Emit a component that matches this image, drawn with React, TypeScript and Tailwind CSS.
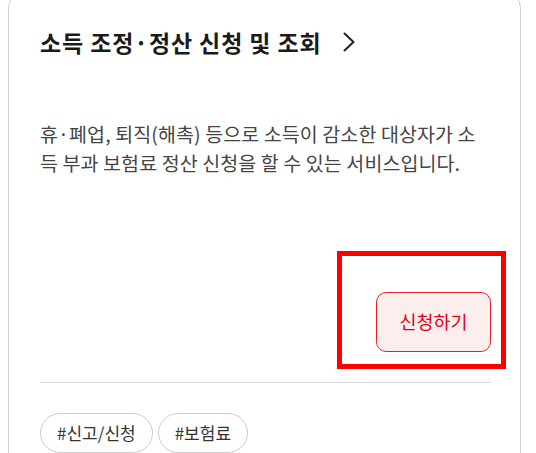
import React from "react";

export default function App() {
  return (
    <div className="w-[536px] h-[453px] overflow-hidden bg-white" style={{ fontFamily: '"Noto Sans CJK KR", "Noto Sans", sans-serif' }}>
      <div className="relative mt-[-8px] ml-[8px] w-[513px] border border-[#cfcfcf] rounded-[16px] pl-[31px] pr-[29px] pt-[34px] pb-[30px]">
        <div className="flex items-center h-[30px]">
          <span className="text-[23px] font-bold text-[#1a1a1a] tracking-[0.9px]">소득 조정·정산 신청 및 조회</span>
          <svg className="ml-[20px]" width="14" height="20" viewBox="0 0 14 20" fill="none">
            <path d="M2.5 1.5 L11.5 10 L2.5 18.5" stroke="#222" strokeWidth="2" strokeLinecap="round" strokeLinejoin="round" />
          </svg>
        </div>
        <p className="mt-[62px] w-[442px] text-[19.5px] leading-[29px] text-[#444] tracking-[0.1px]">
          휴·폐업, 퇴직(해촉) 등으로 소득이 감소한 대상자가 소득 부과 보험료 정산 신청을 할 수 있는 서비스입니다.
        </p>
        <div className="flex justify-end mt-[115px]">
          <div className="relative">
            <button className="w-[115px] h-[60px] rounded-[10px] border border-[#e8202a] bg-[#fdeeee] text-[#e60012] text-[18.5px]">
              신청하기
            </button>
            <div className="absolute left-[-39px] top-[-41px] w-[169px] h-[118px] border-[5px] border-[#ff0000]" />
          </div>
        </div>
        <div className="mt-[30px] border-t border-[#d9d9d9]" />
        <div className="mt-[30px] flex gap-[5px]">
          <span className="h-[40px] px-[16px] flex items-center rounded-full border border-[#cccccc] text-[17px] text-[#333]">#신고/신청</span>
          <span className="h-[40px] px-[16px] flex items-center rounded-full border border-[#cccccc] text-[17px] text-[#333]">#보험료</span>
        </div>
      </div>
    </div>
  );
}
